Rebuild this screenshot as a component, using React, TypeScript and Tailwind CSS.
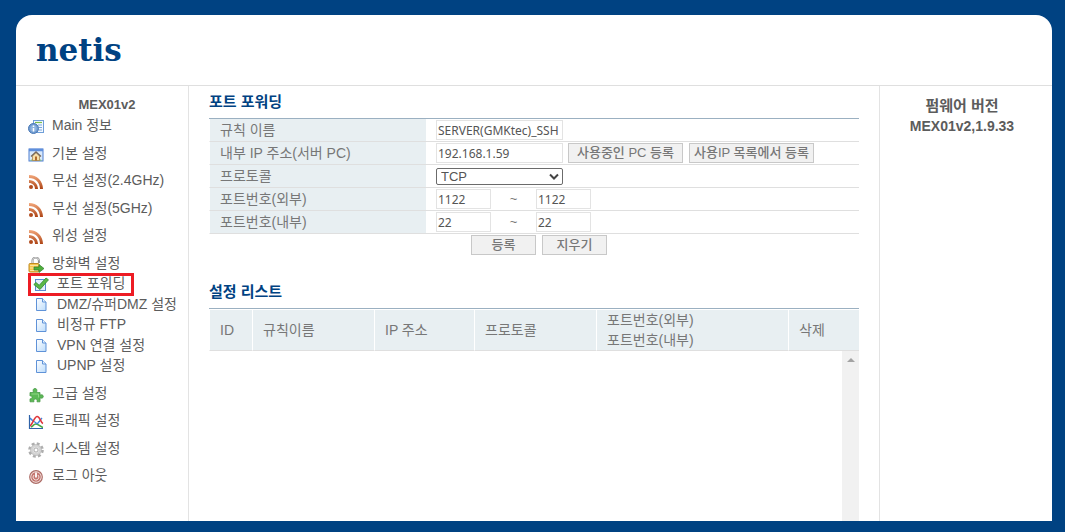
import { useState, type ReactNode } from "react"

type MenuItem = {
  label: string
  icon: ReactNode
  active?: boolean
}

function InfoIcon() {
  return (
    <svg viewBox="0 0 16 16" className="h-4 w-4">
      <rect x="5.5" y="1.5" width="10" height="12" fill="#f4f9ff" stroke="#6f9fd8" />
      <path d="M7 3.500h7" stroke="#7cc04a" strokeWidth="1.2" />
      <path d="M10 6h4M11 8.500h3M11 11h3" stroke="#7aa7dc" />
      <circle cx="5.500" cy="9.500" r="5" fill="#6f9bd0" stroke="#4a78b5" />
      <circle cx="5.500" cy="9.500" r="3.200" fill="#8fb4e0" />
      <path d="M5.500 6.500v1.500M5.500 9v3.500" stroke="#fff" strokeWidth="1.500" />
    </svg>
  )
}

function HomeIcon() {
  return (
    <svg viewBox="0 0 16 16" className="h-4 w-4">
      <rect x="1" y="2" width="14" height="12" fill="#d9e9fb" stroke="#4f7fd0" />
      <path d="M1 3h14" stroke="#5f8fdc" strokeWidth="2.500" />
      <path d="M2 13.500c2-2 10-2 12 0z" fill="#6fb24b" />
      <path d="M4.500 9L8 5.500 11.500 9v4.500h-7z" fill="#f7dfa8" stroke="#a87b3c" strokeWidth=".7" />
      <path d="M3 9.500L8 5l5 4.500" fill="none" stroke="#77685c" strokeWidth="1.400" />
      <rect x="7" y="9.500" width="2" height="4" fill="#b06a2c" />
    </svg>
  )
}

function SignalIcon() {
  return (
    <svg viewBox="0 0 16 16" className="h-4 w-4">
      <defs>
        <linearGradient id="signal" gradientUnits="userSpaceOnUse" x1="0" y1="1" x2="0" y2="15">
          <stop offset="0" stopColor="#f3a87c" />
          <stop offset="1" stopColor="#ad4415" />
        </linearGradient>
      </defs>
      <path d="M1 1c8 0 14 6 14 14h-3C12 8.500 7.500 4 1 4z" fill="url(#signal)" />
      <path d="M1 6c5 0 9 4 9 9H7c0-3.500-2.500-6-6-6z" fill="url(#signal)" />
      <circle cx="3" cy="13" r="2" fill="#b14a1c" />
    </svg>
  )
}

function LockIcon() {
  return (
    <svg viewBox="0 0 16 16" className="h-4 w-4">
      <path d="M4.500 6.500V4a3.200 3.200 0 0 1 6.400-.5V6" fill="none" stroke="#8f8f8f" strokeWidth="2" />
      <path d="M4.500 6V4a3.200 3.200 0 0 1 6.400-.5" fill="none" stroke="#e4e4e4" strokeWidth=".8" />
      <rect x="1" y="6.500" width="10" height="8.500" rx="1" fill="#f6c64c" stroke="#c08a23" />
      <path d="M2 8.500h8M2 11h4M2 13.500h8" stroke="#fbe4a0" />
      <path d="M6 10h5V7.500l5 4-5 4V13H6z" fill="#4fae3c" stroke="#2f7d28" strokeWidth=".7" />
    </svg>
  )
}

function CheckIcon() {
  return (
    <svg viewBox="0 0 16 16" className="h-4 w-4">
      <rect x="2.500" y="3.500" width="10" height="11" fill="#e2eefc" stroke="#5a8bd0" />
      <path d="M.8 8.500l2.200-2 3.200 2.800L13 2l2.500 1.800L7 13.500z" fill="#5cb848" stroke="#2f8a2c" strokeWidth=".8" />
    </svg>
  )
}

function PageIcon() {
  return (
    <svg viewBox="0 0 16 16" className="h-4 w-4">
      <defs>
        <linearGradient id="page" x1="0" y1="0" x2="1" y2="1">
          <stop offset="0" stopColor="#fff" />
          <stop offset="1" stopColor="#bcdcfb" />
        </linearGradient>
      </defs>
      <path d="M3.500 2.500h6l3.500 3.500v8.500H3.500z" fill="url(#page)" stroke="#5f92d8" />
      <path d="M9.500 2.500V6H13" fill="#e6f1fd" stroke="#5f92d8" />
    </svg>
  )
}

function PuzzleIcon() {
  return (
    <svg viewBox="0 0 16 16" className="h-4 w-4">
      <path
        d="M2 5.500h3.500C4.700 3.500 5 1.500 7 1.500s2.300 2 1.500 4H12v2.700c1.500-.8 3.300-.4 3.300 1.300s-1.800 2-3.300 1.300v4H9c.5-2-.3-2.800-1.500-2.800S5.500 13 6 14.800H2v-3c1.500.3 2-.7 2-1.500S3.300 8.500 2 9z"
        fill="#5cb956"
        stroke="#4a9a48"
        strokeWidth=".8"
      />
      <path d="M3.500 7h7v3.500" fill="none" stroke="#8ed586" />
    </svg>
  )
}

function ChartIcon() {
  return (
    <svg viewBox="0 0 16 16" className="h-4 w-4" fill="none">
      <path d="M3 13c3-1 2-3 5-3s4 3 7 3.500" stroke="#49a845" strokeWidth="1.600" />
      <path d="M2 4c2 3 4 3 6 5s3-2 6-5" stroke="#3f86e0" strokeWidth="1.400" />
      <path d="M2 12c3-2 4-9 7-9.500S12 8 15 9.500" stroke="#e0373c" strokeWidth="1.600" />
      <path d="M1.500 1v13.500H15" stroke="#2f62a8" strokeWidth="1.200" />
    </svg>
  )
}

function GearIcon() {
  return (
    <svg viewBox="0 0 16 16" className="h-4 w-4">
      <circle cx="8" cy="8" r="6.400" fill="none" stroke="#adadad" strokeWidth="2.800" strokeDasharray="2.800 2.227" />
      <circle cx="8" cy="8" r="5.500" fill="#d4d4d4" stroke="#b0b0b0" strokeWidth=".6" />
      <circle cx="8" cy="8" r="3" fill="#e6e6e6" />
      <circle cx="8" cy="8" r="2" fill="#fff" stroke="#a0a0a0" strokeWidth=".8" />
    </svg>
  )
}

function PowerIcon() {
  return (
    <svg viewBox="0 0 16 16" className="h-4 w-4" fill="none">
      <circle cx="8" cy="8" r="6.300" fill="#f6e9e7" stroke="#ad6c66" strokeWidth="1.200" />
      <circle cx="8" cy="8" r="4.800" fill="#c4766f" />
      <path d="M6 6a2.900 2.900 0 1 0 4 0" stroke="#f3dedb" />
      <path d="M8 3.500v5" stroke="#fff" strokeWidth="1.800" />
    </svg>
  )
}

const TOP_MENU: MenuItem[] = [
  { label: "Main 정보", icon: <InfoIcon /> },
  { label: "기본 설정", icon: <HomeIcon /> },
  { label: "무선 설정(2.4GHz)", icon: <SignalIcon /> },
  { label: "무선 설정(5GHz)", icon: <SignalIcon /> },
  { label: "위성 설정", icon: <SignalIcon /> },
  { label: "방화벽 설정", icon: <LockIcon /> },
]

const FIREWALL_MENU: MenuItem[] = [
  { label: "포트 포워딩", icon: <CheckIcon />, active: true },
  { label: "DMZ/슈퍼DMZ 설정", icon: <PageIcon /> },
  { label: "비정규 FTP", icon: <PageIcon /> },
  { label: "VPN 연결 설정", icon: <PageIcon /> },
  { label: "UPNP 설정", icon: <PageIcon /> },
]

const BOTTOM_MENU: MenuItem[] = [
  { label: "고급 설정", icon: <PuzzleIcon /> },
  { label: "트래픽 설정", icon: <ChartIcon /> },
  { label: "시스템 설정", icon: <GearIcon /> },
  { label: "로그 아웃", icon: <PowerIcon /> },
]

const INPUT =
  "h-5 border border-[#e3e3e3] bg-white px-px font-['Noto_Sans'] text-xs text-[#555] outline-none"
const BUTTON =
  "h-5 shrink-0 border border-[#c8c8c8] bg-[#f1f1f1] text-center text-[13px] leading-[18px] font-medium whitespace-nowrap text-[#777]"

function Menu({ items, sub = false, className }: { items: MenuItem[]; sub?: boolean; className: string }) {
  return (
    <ul className={`flex flex-col justify-between ${className}`}>
      {items.map((item) => (
        <li key={item.label} className="relative h-5">
          <a
            href="#"
            className={`flex h-5 items-center gap-2 whitespace-nowrap text-[#5c5c5c] ${sub ? "pl-[17px]" : "pl-3"}`}
          >
            <span className={`shrink-0 ${sub ? "pt-px" : "pt-1"}`}>{item.icon}</span>
            {item.label}
          </a>
          {item.active && (
            <span className="pointer-events-none absolute top-0 left-3 h-[23px] w-[106px] border-3 border-[#ed1c24]" />
          )}
        </li>
      ))}
    </ul>
  )
}

function FormRow({ label, htmlFor, children }: { label: string; htmlFor: string; children: ReactNode }) {
  return (
    <tr>
      <th
        scope="row"
        className="h-[23px] w-[217px] border-b border-l border-b-[#dfdfdf] border-l-white bg-[#e8eff2] p-0 pl-[10px] text-left font-normal"
      >
        <label htmlFor={htmlFor} className="block leading-5">
          {label}
        </label>
      </th>
      <td className="h-[23px] border-b border-[#dfdfdf] p-0 pl-[10px]">
        <div className="flex h-[22px] items-center">{children}</div>
      </td>
    </tr>
  )
}

function PortRange({ id, label, value }: { id: string; label: string; value: string }) {
  const [from, setFrom] = useState(value)
  const [to, setTo] = useState(value)

  return (
    <FormRow label={label} htmlFor={id}>
      <input id={id} value={from} onChange={(e) => setFrom(e.target.value)} className={`w-[55px] ${INPUT}`} />
      <span className="w-[45px] text-center text-[13px]">~</span>
      <input
        aria-label={`${label} 끝`}
        value={to}
        onChange={(e) => setTo(e.target.value)}
        className={`w-[55px] ${INPUT}`}
      />
    </FormRow>
  )
}

export default function App() {
  const [name, setName] = useState("SERVER(GMKtec)_SSH")
  const [ip, setIp] = useState("192.168.1.59")

  return (
    <div className="flex min-h-screen flex-col bg-[#004282] pt-[15px] pr-[13px] pb-[11px] pl-4 font-['Liberation_Sans','Noto_Sans_CJK_KR',sans-serif] text-sm leading-5 text-[#777]">
      <div className="flex flex-1 flex-col rounded-t-2xl bg-white">
        <header className="flex h-[71px] items-center border-b border-[#dfdfdf] pl-5">
          <a href="#" className="font-['DejaVu_Serif',serif] text-[31px] leading-10 font-bold text-[#004282]">
            netis
          </a>
        </header>

        <div className="flex flex-1">
          <nav className="w-[173px] shrink-0 border-r border-[#e3e3e3] pt-[9px]">
            <p className="pl-[10px] text-center text-[13px] font-bold text-[#5c5c5c]">MEX01v2</p>
            <Menu items={TOP_MENU} className="h-[158px]" />
            <Menu items={FIREWALL_MENU} sub className="h-[102px]" />
            <Menu items={BOTTOM_MENU} className="mt-2 h-[102px]" />
          </nav>

          <main className="flex min-w-0 flex-1 flex-col px-5 pt-[6px]">
            <h2 className="text-[15px] font-bold text-[#004282]">포트 포워딩</h2>

            <form onSubmit={(e) => e.preventDefault()} className="mt-[6px]">
              <table className="w-full table-fixed border-separate border-spacing-0 border-t border-[#9bb0c1]">
                <tbody>
                  <FormRow label="규칙 이름" htmlFor="name">
                    <input
                      id="name"
                      value={name}
                      onChange={(e) => setName(e.target.value)}
                      className={`w-[127px] ${INPUT}`}
                    />
                  </FormRow>
                  <FormRow label="내부 IP 주소(서버 PC)" htmlFor="ip">
                    <input
                      id="ip"
                      value={ip}
                      onChange={(e) => setIp(e.target.value)}
                      className={`w-[127px] ${INPUT}`}
                    />
                    <button type="button" className={`ml-[5px] w-[115px] ${BUTTON}`}>
                      사용중인 PC 등록
                    </button>
                    <button type="button" className={`ml-[6px] w-[125px] ${BUTTON}`}>
                      사용IP 목록에서 등록
                    </button>
                  </FormRow>
                  <FormRow label="프로토콜" htmlFor="protocol">
                    <div className="relative w-[127px]">
                      <select
                        id="protocol"
                        className="block h-[17px] w-full appearance-none rounded-xs border border-[#6b6b6b] bg-white pl-1 text-[13px] leading-[15px] text-[#555]"
                      >
                        <option>TCP</option>
                        <option>UDP</option>
                        <option>TCP/UDP</option>
                      </select>
                      <svg
                        viewBox="0 0 10 7"
                        className="pointer-events-none absolute top-[5px] right-1 h-[7px] w-[10px]"
                        fill="none"
                        stroke="#444"
                        strokeWidth="2"
                      >
                        <path d="M1 1.500l4 4 4-4" />
                      </svg>
                    </div>
                  </FormRow>
                  <PortRange id="external-port" label="포트번호(외부)" value="1122" />
                  <PortRange id="internal-port" label="포트번호(내부)" value="22" />
                </tbody>
              </table>

              <div className="mt-px flex justify-center gap-[6px] pl-[10px]">
                <button type="submit" className={`w-[65px] ${BUTTON}`}>
                  등록
                </button>
                <button type="reset" className={`w-[65px] ${BUTTON}`}>
                  지우기
                </button>
              </div>
            </form>

            <h2 className="mt-[27px] text-[15px] font-bold text-[#004282]">설정 리스트</h2>

            <table className="mt-[6px] w-full table-fixed border-separate border-spacing-0 border-t border-[#9bb0c1] text-left">
              <thead className="[&_th]:h-[42px] [&_th]:border-t [&_th]:border-b [&_th]:border-l [&_th]:border-t-white [&_th]:border-b-[#dfdfdf] [&_th]:border-l-white [&_th]:bg-[#e8eff2] [&_th]:p-0 [&_th]:pl-[10px] [&_th]:font-normal">
                <tr>
                  <th className="w-[43px]">ID</th>
                  <th className="w-[122px]">규칙이름</th>
                  <th className="w-[100px]">IP 주소</th>
                  <th className="w-[122px]">프로토콜</th>
                  <th className="w-48">
                    포트번호(외부)
                    <br />
                    포트번호(내부)
                  </th>
                  <th>삭제</th>
                </tr>
              </thead>
            </table>

            <div className="flex flex-1 justify-end">
              <div className="flex w-[17px] justify-center bg-[#f1f1f1] pt-[7px]">
                <svg viewBox="0 0 8 4" className="h-1 w-2" fill="#a3a3a3">
                  <path d="M4 0l4 4H0z" />
                </svg>
              </div>
            </div>
          </main>

          <aside className="w-[173px] shrink-0 border-l border-[#e3e3e3] pt-[10px] pr-[8px] text-center font-bold text-[#5c5c5c]">
            <p className="text-[15px]">펌웨어 버전</p>
            <p>MEX01v2,1.9.33</p>
          </aside>
        </div>
      </div>
    </div>
  )
}
